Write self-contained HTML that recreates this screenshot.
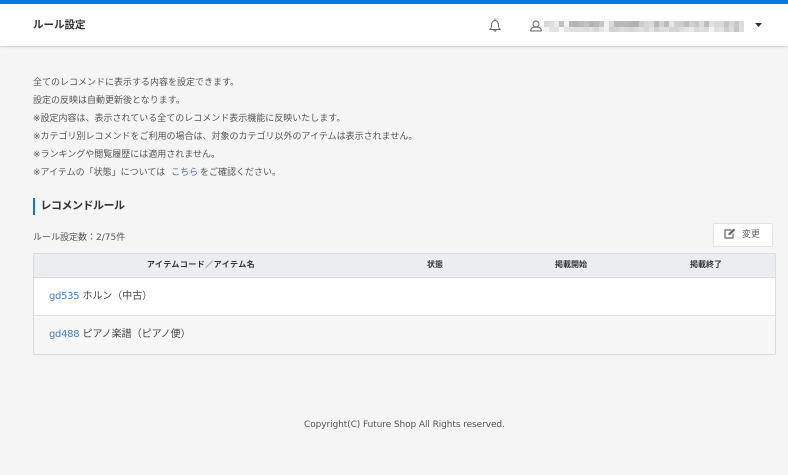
<!DOCTYPE html>
<html lang="ja"><head><meta charset="utf-8"><title>ルール設定</title>
<style>
html,body{margin:0;padding:0}
body{width:788px;height:475px;overflow:hidden;background:#f5f5f5;position:relative;font-family:"DejaVu Sans","Noto Sans CJK JP",sans-serif;color:#444;font-size:9px}
.a{position:absolute;white-space:nowrap}
a{color:#3f7fc4;text-decoration:none}
.l{left:33px;font-size:9px;line-height:18px;color:#555}
.th{font-size:8px;font-weight:700;color:#333;transform:translateX(-50%);top:259px;line-height:12px}
</style></head><body>
<div class="a" style="left:0;top:0;width:788px;height:46px;background:#fff;box-shadow:0 1px 2px #ccc"></div>
<div class="a" style="left:0;top:0;width:788px;height:4px;background:#0a76e4"></div>
<div class="a" style="left:33px;top:17px;font-size:10.5px;font-weight:700;color:#333;line-height:16px;font-family:'Liberation Sans','Noto Sans CJK JP',sans-serif">ルール設定</div>
<svg class="a" style="left:488px;top:17px" width="14" height="16" viewBox="0 0 14 16" fill="none" stroke="#666" stroke-width="1"><path d="M2 12.500h10c-1-1-1.600-2-1.600-5 0-2.200-1.500-4-3.400-4s-3.400 1.800-3.400 4c0 3-.6 4-1.600 5z"/><path d="M7 1.500v2M5.800 12.500c0 1 .5 1.600 1.200 1.600s1.200-.6 1.200-1.600"/></svg>
<svg class="a" style="left:530px;top:20px" width="12" height="12" viewBox="0 0 12 12" fill="none" stroke="#666" stroke-width="1"><circle cx="6" cy="4" r="3"/><path d="M.8 10.200c0-2 1.600-3 3-3h4.400c1.400 0 3 1 3 3v.8H.8z"/></svg>
<svg class="a" style="left:544px;top:21px" width="200" height="11" shape-rendering="crispEdges">
<g fill="#d6d6d6">
<rect x="0" width="5" height="6" fill="#d8d8d8"/><rect x="5" width="5" height="6" fill="#dedede"/><rect x="10" width="5" height="6" fill="#ebebeb"/><rect x="15" width="5" height="6" fill="#c0c0c0"/><rect x="20" width="5" height="6" fill="#f2f2f2"/><rect x="25" width="5" height="6" fill="#b6b6b6"/><rect x="30" width="5" height="6" fill="#b4b4b4"/><rect x="35" width="5" height="6" fill="#bcbcbc"/><rect x="40" width="5" height="6" fill="#c2c2c2"/><rect x="45" width="5" height="6" fill="#b4b4b4"/><rect x="50" width="5" height="6" fill="#bababa"/><rect x="55" width="5" height="6" fill="#c6c6c6"/><rect x="60" width="5" height="6" fill="#f2f2f2"/><rect x="65" width="5" height="6" fill="#d8d8d8"/><rect x="70" width="5" height="6" fill="#b8b8b8"/><rect x="75" width="5" height="6" fill="#b8b8b8"/><rect x="80" width="5" height="6" fill="#b8b8b8"/><rect x="85" width="5" height="6" fill="#b2b2b2"/><rect x="90" width="5" height="6" fill="#b2b2b2"/><rect x="95" width="5" height="6" fill="#cccccc"/><rect x="100" width="5" height="6" fill="#d6d6d6"/><rect x="105" width="5" height="6" fill="#dadada"/><rect x="110" width="5" height="6" fill="#b8b8b8"/><rect x="115" width="5" height="6" fill="#d2d2d2"/><rect x="120" width="5" height="6" fill="#bcbcbc"/><rect x="125" width="5" height="6" fill="#e6e6e6"/><rect x="130" width="5" height="6" fill="#d0d0d0"/><rect x="135" width="5" height="6" fill="#cccccc"/><rect x="140" width="5" height="6" fill="#bebebe"/><rect x="145" width="5" height="6" fill="#d0d0d0"/><rect x="150" width="5" height="6" fill="#c8c8c8"/><rect x="155" width="5" height="6" fill="#dcdcdc"/><rect x="160" width="5" height="6" fill="#bcbcbc"/><rect x="165" width="5" height="6" fill="#e0e0e0"/><rect x="170" width="5" height="6" fill="#dadada"/><rect x="175" width="5" height="6" fill="#d8d8d8"/><rect x="180" width="5" height="6" fill="#c4c4c4"/><rect x="185" width="5" height="6" fill="#d6d6d6"/><rect x="190" width="5" height="6" fill="#c8c8c8"/><rect x="195" width="5" height="6" fill="#dcdcdc"/>
<rect x="0" y="6" width="5" height="5" fill="#f2f2f2"/><rect x="5" y="6" width="5" height="5" fill="#e4e4e4"/><rect x="10" y="6" width="5" height="5" fill="#e2e2e2"/><rect x="15" y="6" width="5" height="5" fill="#fafafa"/><rect x="20" y="6" width="5" height="5" fill="#e4e4e4"/><rect x="25" y="6" width="5" height="5" fill="#e0e0e0"/><rect x="30" y="6" width="5" height="5" fill="#dedede"/><rect x="35" y="6" width="5" height="5" fill="#e0e0e0"/><rect x="40" y="6" width="5" height="5" fill="#dcdcdc"/><rect x="45" y="6" width="5" height="5" fill="#e2e2e2"/><rect x="50" y="6" width="5" height="5" fill="#d8d8d8"/><rect x="55" y="6" width="5" height="5" fill="#e6e6e6"/><rect x="60" y="6" width="5" height="5" fill="#f0f0f0"/><rect x="65" y="6" width="5" height="5" fill="#d0d0d0"/><rect x="70" y="6" width="5" height="5" fill="#d6d6d6"/><rect x="75" y="6" width="5" height="5" fill="#dcdcdc"/><rect x="80" y="6" width="5" height="5" fill="#d8d8d8"/><rect x="85" y="6" width="5" height="5" fill="#d4d4d4"/><rect x="90" y="6" width="5" height="5" fill="#dadada"/><rect x="95" y="6" width="5" height="5" fill="#e0e0e0"/><rect x="100" y="6" width="5" height="5" fill="#d8d8d8"/><rect x="105" y="6" width="5" height="5" fill="#e4e4e4"/><rect x="110" y="6" width="5" height="5" fill="#d2d2d2"/><rect x="115" y="6" width="5" height="5" fill="#dcdcdc"/><rect x="120" y="6" width="5" height="5" fill="#e0e0e0"/><rect x="125" y="6" width="5" height="5" fill="#d6d6d6"/><rect x="130" y="6" width="5" height="5" fill="#d4d4d4"/><rect x="135" y="6" width="5" height="5" fill="#dedede"/><rect x="140" y="6" width="5" height="5" fill="#e4e4e4"/><rect x="145" y="6" width="5" height="5" fill="#e8e8e8"/><rect x="150" y="6" width="5" height="5" fill="#d8d8d8"/><rect x="155" y="6" width="5" height="5" fill="#e0e0e0"/><rect x="160" y="6" width="5" height="5" fill="#dcdcdc"/><rect x="165" y="6" width="5" height="5" fill="#f4f4f4"/><rect x="170" y="6" width="5" height="5" fill="#e0e0e0"/><rect x="175" y="6" width="5" height="5" fill="#e4e4e4"/><rect x="180" y="6" width="5" height="5" fill="#d0d0d0"/><rect x="185" y="6" width="5" height="5" fill="#dcdcdc"/><rect x="190" y="6" width="5" height="5" fill="#c4c4c4"/><rect x="195" y="6" width="5" height="5" fill="#dedede"/>
</g></svg>
<svg class="a" style="left:754px;top:22px" width="9" height="6" viewBox="0 0 9 6"><path d="M1 1h7L4.500 5z" fill="#333"/></svg>

<div class="a l" style="top:74px">全てのレコメンドに表示する内容を設定できます。</div>
<div class="a l" style="top:92px">設定の反映は自動更新後となります。</div>
<div class="a l" style="top:110px">※設定内容は、表示されている全てのレコメンド表示機能に反映いたします。</div>
<div class="a l" style="top:128px">※カテゴリ別レコメンドをご利用の場合は、対象のカテゴリ以外のアイテムは表示されません。</div>
<div class="a l" style="top:146px">※ランキングや閲覧履歴には適用されません。</div>
<div class="a l" style="top:164px">※アイテムの「状態」については <a href="#" style="color:#4a6fa8;margin:0 -1px 0 3px">こちら</a> をご確認ください。</div>

<div class="a" style="left:33px;top:198px;width:2px;height:17px;background:#0a76e4"></div>
<div class="a" style="left:40.500px;top:197px;font-size:11px;font-weight:700;color:#333;line-height:17px;letter-spacing:-.5px">レコメンドルール</div>
<div class="a" style="left:33px;top:230px;font-size:9px;line-height:16px;color:#555">ルール設定数：2/75件</div>

<div class="a" style="left:713px;top:223px;width:58px;height:22px;background:#fff;border:1px solid #e4e4e4;border-radius:2px"></div>
<svg class="a" style="left:724px;top:228px" width="12" height="11" viewBox="0 0 12 11" fill="none" stroke="#666" stroke-width="1.200"><path d="M7.500 2H1v8h8V5.500"/><path d="M4.500 7l.4-1.800L9.800.8l1.300 1.300L6.300 6.600z" fill="#666" stroke-width=".5"/></svg>
<div class="a" style="left:742px;top:229px;font-size:9px;line-height:13px;color:#666">変更</div>

<div class="a" style="left:33px;top:253px;width:741px;height:100px;background:#f7f7f7;border:1px solid #dcdcdc;border-radius:2px"></div>
<div class="a" style="left:34px;top:254px;width:741px;height:23px;background:#ecedf1;border-bottom:1px solid #d8d9dd"></div>
<div class="a" style="left:34px;top:278px;width:741px;height:37px;background:#fff;border-bottom:1px solid #e0e0e0"></div>
<div class="a th" style="left:201px;letter-spacing:.45px">アイテムコード／アイテム名</div>
<div class="a th" style="left:435px">状態</div>
<div class="a th" style="left:571px">掲載開始</div>
<div class="a th" style="left:706px">掲載終了</div>
<div class="a" style="left:49px;top:289px;font-size:10px;line-height:15px;color:#444"><a href="#" style="letter-spacing:-.3px">gd535</a> ホルン（中古）</div>
<div class="a" style="left:49px;top:327px;font-size:10px;line-height:15px;color:#444"><a href="#" style="letter-spacing:-.3px">gd488</a> ピアノ楽譜（ピアノ便）</div>
<div class="a" style="left:304px;top:418px;font-size:9px;line-height:15px;color:#555;letter-spacing:-.09px">Copyright(C) Future Shop All Rights reserved.</div>
</body></html>
